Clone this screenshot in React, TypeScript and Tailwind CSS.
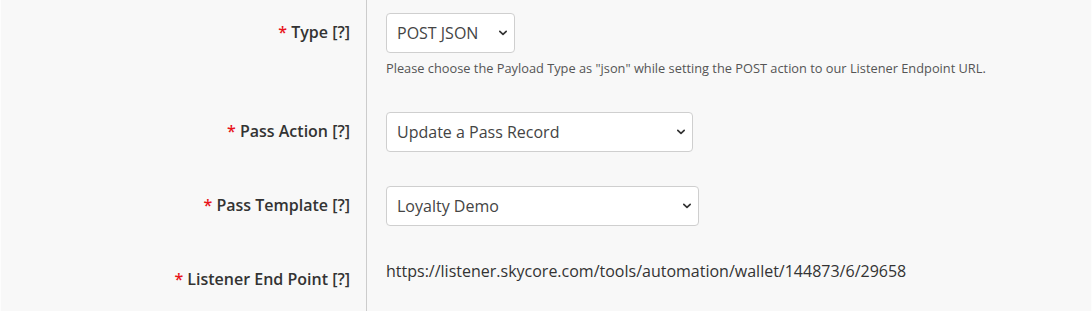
import React from "react";

function Chevron() {
  return (
    <svg className="pointer-events-none absolute right-[7px] top-1/2 -translate-y-1/2" width="10" height="7" viewBox="0 0 10 7" fill="none">
      <path d="M1.8 1.8 L5 4.8 L8.2 1.8" stroke="#333" strokeWidth="1.7" strokeLinecap="round" strokeLinejoin="round" />
    </svg>
  );
}

function Select({ value, width }: { value: string; width: string }) {
  return (
    <div className={`relative h-[40px] ${width}`}>
      <select
        defaultValue={value}
        className="h-full w-full appearance-none rounded-[4px] border border-[#cfcfcf] bg-white pl-[10px] text-[16px] text-[#444] outline-none"
        style={{ fontFamily: '"Open Sans", sans-serif' }}
      >
        <option>{value}</option>
      </select>
      <Chevron />
    </div>
  );
}

function Label({ text }: { text: string }) {
  return (
    <div className="flex w-[366px] shrink-0 justify-end border-r border-[#cccccc] pr-[16px]">
      <div className="pt-[8px] text-[16px] font-semibold leading-[22px] text-[#333]">
        <span className="text-[#e8141b]">*</span> {text} [?]
      </div>
    </div>
  );
}

export default function App() {
  return (
    <div
      className="h-[311px] w-full overflow-hidden border-x border-[#fdfdfd] bg-[#f8f8f8]"
      style={{ fontFamily: '"Open Sans", sans-serif' }}
    >
      <div className="flex">
        <div className="h-[13px] w-[366px] shrink-0 border-r border-[#cccccc]" />
      </div>
      <div className="flex">
        <Label text="Type" />
        <div className="pb-[35px] pl-[19px]">
          <Select value="POST JSON" width="w-[129px]" />
          <div className="mt-[7px] text-[12.8px] leading-[17px] text-[#555]">
            Please choose the Payload Type as "json" while setting the POST action to our Listener Endpoint URL.
          </div>
        </div>
      </div>
      <div className="flex">
        <Label text="Pass Action" />
        <div className="pb-[34px] pl-[19px]">
          <Select value="Update a Pass Record" width="w-[307px]" />
        </div>
      </div>
      <div className="flex">
        <Label text="Pass Template" />
        <div className="pb-[34px] pl-[19px]">
          <Select value="Loyalty Demo" width="w-[313px]" />
        </div>
      </div>
      <div className="flex h-[80px]">
        <Label text="Listener End Point" />
        <div className="pl-[19px] text-[16px] leading-[22px] text-[#333]">
          https://listener.skycore.com/tools/automation/wallet/144873/6/29658
        </div>
      </div>
    </div>
  );
}
